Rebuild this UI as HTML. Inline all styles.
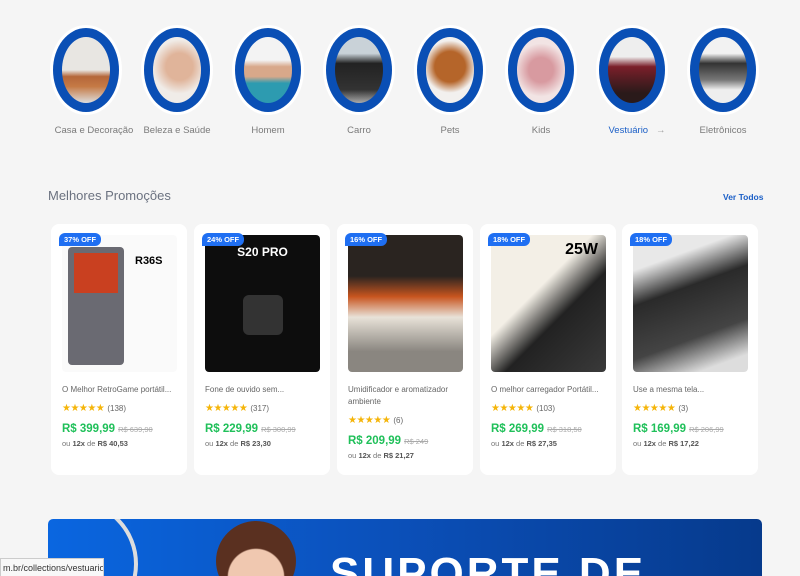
<!DOCTYPE html>
<html><head><meta charset="utf-8">
<style>
*{margin:0;padding:0;box-sizing:border-box}
html,body{width:800px;height:576px;overflow:hidden}
body{background:#f5f5f5;font-family:"Liberation Sans",sans-serif;position:relative}
.cat{position:absolute;top:25px;width:78px;text-align:center}
.ring{width:72px;height:90px;margin:0 auto;border-radius:50%;background:#fff;padding:3px}
.ring2{width:100%;height:100%;border-radius:50%;background:#0a4fb5;padding:9px}
.ph{width:100%;height:100%;border-radius:50%}
.cl{position:absolute;top:125px;font-size:9.5px;color:#7a7a7a;width:110px;text-align:center}
h2{position:absolute;left:48px;top:188px;font-size:13px;color:#6b7280;font-weight:normal}
.vt{position:absolute;left:723px;top:192px;font-size:8.5px;color:#1b5fc7;font-weight:bold}
.card{position:absolute;top:224px;width:136px;height:251px;background:#fff;border-radius:8px}
.img{position:absolute;left:11px;top:11px;width:115px;height:137px;border-radius:4px;overflow:hidden}
.b{position:absolute;left:8px;top:9px;background:#1f6ff2;color:#fff;font-size:7.5px;font-weight:bold;padding:2px 5px;border-radius:6px 6px 6px 0}
.t{position:absolute;left:11px;top:160px;font-size:8px;color:#666;width:118px;line-height:12px}
.st{position:absolute;left:11px;font-size:10px;color:#f5b50a;letter-spacing:-0.5px}
.st span{color:#666;font-size:8px;letter-spacing:0;margin-left:3px}
.p{position:absolute;left:11px;font-size:11.5px;color:#20c05a;font-weight:bold}
.p s{font-size:7.5px;color:#aaa;font-weight:normal;margin-left:3px}
.i{position:absolute;left:11px;font-size:7.5px;color:#777}
.i b{color:#555}
</style></head><body>

<div class="cat" style="left:47px"><div class="ring"><div class="ring2"><div class="ph" style="background:linear-gradient(#e8e6e2 50%,#b5673a 60%,#c57a45 75%,#ddd)"></div></div></div></div>
<div class="cat" style="left:138px"><div class="ring"><div class="ring2"><div class="ph" style="background:radial-gradient(circle at 55% 45%,#e0b49a 30%,#f0ece8 60%)"></div></div></div></div>
<div class="cat" style="left:229px"><div class="ring"><div class="ring2"><div class="ph" style="background:linear-gradient(#f3f3f3 35%,#d8a88a 45%,#d8a88a 60%,#2d9bb0 70%)"></div></div></div></div>
<div class="cat" style="left:320px"><div class="ring"><div class="ring2"><div class="ph" style="background:linear-gradient(#c9d2d8 25%,#222 40%,#333 80%,#aaa)"></div></div></div></div>
<div class="cat" style="left:411px"><div class="ring"><div class="ring2"><div class="ph" style="background:radial-gradient(circle at 50% 45%,#b5652a 35%,#f2f0ee 60%)"></div></div></div></div>
<div class="cat" style="left:502px"><div class="ring"><div class="ring2"><div class="ph" style="background:radial-gradient(circle at 50% 50%,#d89aa0 30%,#f2e4e4 65%)"></div></div></div></div>
<div class="cat" style="left:593px"><div class="ring"><div class="ring2"><div class="ph" style="background:linear-gradient(#eee 30%,#7a1f2a 45%,#2a1a1a 85%)"></div></div></div></div>
<div class="cat" style="left:684px"><div class="ring"><div class="ring2"><div class="ph" style="background:linear-gradient(#f2f2f2 25%,#333 40%,#777 65%,#eee 80%)"></div></div></div></div>

<div class="cl" style="left:39px">Casa e Decoração</div>
<div class="cl" style="left:122px">Beleza e Saúde</div>
<div class="cl" style="left:213px">Homem</div>
<div class="cl" style="left:304px">Carro</div>
<div class="cl" style="left:395px">Pets</div>
<div class="cl" style="left:486px">Kids</div>
<div class="cl" style="left:582px;color:#1b5fc7">Vestuário &nbsp;&nbsp;<span style="color:#999">→</span></div>
<div class="cl" style="left:668px">Eletrônicos</div>

<h2>Melhores Promoções</h2>
<div class="vt">Ver Todos</div>

<div class="card" style="left:51px">
<div class="img" style="background:#fafafa"><div style="position:absolute;left:6px;top:12px;width:56px;height:118px;background:#6a6a72;border-radius:4px"><div style="margin:6px;height:40px;background:#c94020"></div></div><div style="position:absolute;left:73px;top:20px;font-weight:bold;font-size:11px">R36S</div></div>
<div class="b">37% OFF</div>
<div class="t">O Melhor RetroGame portátil...</div>
<div class="st" style="top:179px">★★★★★<span>(138)</span></div>
<div class="p" style="top:199px">R$ 399,99<s>R$ 639,90</s></div>
<div class="i" style="top:215px">ou <b>12x</b> de <b>R$ 40,53</b></div>
</div>

<div class="card" style="left:194px">
<div class="img" style="background:#0d0d0d"><div style="position:absolute;left:0;width:100%;top:10px;text-align:center;color:#fff;font-weight:bold;font-size:12px">S20 PRO</div><div style="position:absolute;left:38px;top:60px;width:40px;height:40px;background:#333;border-radius:6px"></div></div>
<div class="b">24% OFF</div>
<div class="t">Fone de ouvido sem...</div>
<div class="st" style="top:179px">★★★★★<span>(317)</span></div>
<div class="p" style="top:199px">R$ 229,99<s>R$ 300,99</s></div>
<div class="i" style="top:215px">ou <b>12x</b> de <b>R$ 23,30</b></div>
</div>

<div class="card" style="left:337px">
<div class="img" style="background:linear-gradient(#2a2420 30%,#c8551f 45%,#e8e2d8 60%,#8a8680 85%)"></div>
<div class="b">16% OFF</div>
<div class="t">Umidificador e aromatizador ambiente</div>
<div class="st" style="top:191px">★★★★★<span>(6)</span></div>
<div class="p" style="top:211px">R$ 209,99<s>R$ 249</s></div>
<div class="i" style="top:227px">ou <b>12x</b> de <b>R$ 21,27</b></div>
</div>

<div class="card" style="left:480px">
<div class="img" style="background:linear-gradient(135deg,#f3efe6 40%,#222 60%,#3a3a3a)"><div style="position:absolute;right:8px;top:6px;font-weight:bold;font-size:16px">25W</div></div>
<div class="b">18% OFF</div>
<div class="t">O melhor carregador Portátil...</div>
<div class="st" style="top:179px">★★★★★<span>(103)</span></div>
<div class="p" style="top:199px">R$ 269,99<s>R$ 318,50</s></div>
<div class="i" style="top:215px">ou <b>12x</b> de <b>R$ 27,35</b></div>
</div>

<div class="card" style="left:622px">
<div class="img" style="background:linear-gradient(160deg,#e8e8e8 20%,#2a2a2a 40%,#444 70%,#ddd 90%)"></div>
<div class="b">18% OFF</div>
<div class="t">Use a mesma tela...</div>
<div class="st" style="top:179px">★★★★★<span>(3)</span></div>
<div class="p" style="top:199px">R$ 169,99<s>R$ 206,99</s></div>
<div class="i" style="top:215px">ou <b>12x</b> de <b>R$ 17,22</b></div>
</div>

<div style="position:absolute;left:48px;top:519px;width:714px;height:57px;border-radius:5px 5px 0 0;background:linear-gradient(90deg,#0a66e0,#0b4fb8 50%,#063a8c);overflow:hidden">
<div style="position:absolute;left:-40px;top:-20px;width:130px;height:130px;border:4px solid #ddd;border-radius:50%;clip-path:inset(0 0 0 50%)"></div>
<div style="position:absolute;left:168px;top:2px;width:80px;height:80px;border-radius:50%;background:radial-gradient(circle at 50% 70%,#f0c8b0 40%,#5a3020 42%)"></div>
<div style="position:absolute;left:282px;top:33px;color:#fff;font-weight:900;font-size:44px;letter-spacing:3px;line-height:44px">SUPORTE DE</div>
</div>

<div style="position:absolute;left:0;top:558px;width:104px;height:18px;background:#f8f8f8;border:1px solid #ccc;border-bottom:0;font-size:9px;color:#333;padding:4px 2px;white-space:nowrap;overflow:hidden">m.br/collections/vestuario</div>
</body></html>
